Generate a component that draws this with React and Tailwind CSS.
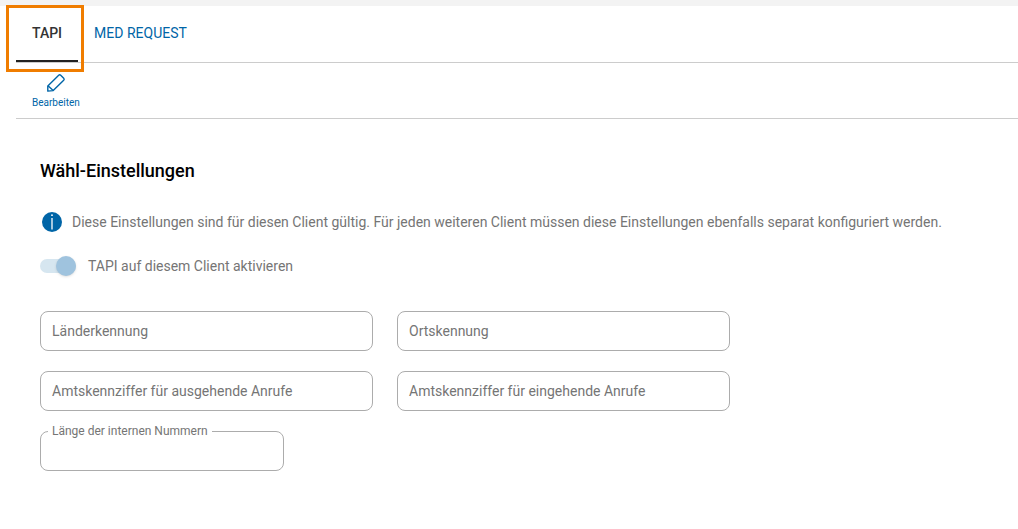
import React, { useState } from 'react';

const FIELDS = [
    { name: 'country_code', label: 'Länderkennung' },
    { name: 'area_code', label: 'Ortskennung' },
    { name: 'prefix_outgoing', label: 'Amtskennziffer für ausgehende Anrufe' },
    { name: 'prefix_incoming', label: 'Amtskennziffer für eingehende Anrufe' }
];

const PencilIcon = () => (
    <svg width="20" height="20" viewBox="0 0 20 20" fill="none" stroke="currentColor" strokeWidth="1.4" strokeLinejoin="round" aria-hidden="true">
        <path d="M12.7 2.2Q13.7 1.2 14.7 2.2L17.7 5.2Q18.7 6.2 17.7 7.2L7.2 17.6L1.8 18.1V12.9Z" />
        <path d="M2 12.7L7.2 17.6" />
    </svg>
);

const InfoIcon = () => (
    <svg width="20" height="20" viewBox="0 0 20 20" className="shrink-0" aria-hidden="true">
        <circle cx="10" cy="10" r="10" fill="#0065a7" />
        <path d="M10 6V17.5" stroke="#ffffff" strokeWidth="1.3" />
        <circle cx="10" cy="3.2" r="0.9" fill="#ffffff" />
    </svg>
);

const TextField = ({ name, label, value, onChange, readOnly }) => (
    <div className="relative">
        <input
            type="text"
            id={name}
            name={name}
            value={value}
            onChange={onChange}
            readOnly={readOnly}
            placeholder=" "
            className="peer block w-full h-10 rounded-lg border border-[#acacac] px-3 text-sm text-[#222222] outline-none"
        />
        <label
            htmlFor={name}
            className="absolute left-2 -top-2 px-1 bg-white text-xs text-[#757575] pointer-events-none peer-placeholder-shown:top-[10px] peer-placeholder-shown:text-sm"
        >
            {label}
        </label>
    </div>
);

const App = () => {
    const [tab, setTab] = useState('TAPI');
    const [editing, setEditing] = useState(false);
    const [enabled, setEnabled] = useState(true);
    const [formData, setFormData] = useState({
        country_code: '',
        area_code: '',
        prefix_outgoing: '',
        prefix_incoming: '',
        number_length: ''
    });

    const handleInputChange = (e) => {
        const { name, value } = e.target;
        setFormData(prev => ({ ...prev, [name]: value }));
    };

    return (
        <div className="min-h-screen bg-white border-t-6 border-[#f3f3f3] pl-4 font-[Roboto,sans-serif]">
            <nav className="flex border-b border-[#cccccc] text-sm">
                {['TAPI', 'MED REQUEST'].map(t => (
                    <div key={t} className="relative">
                        <button
                            type="button"
                            onClick={() => setTab(t)}
                            className={`h-14 px-4 border-b-2 ${tab === t ? 'border-[#222222] font-medium text-[#333333]' : 'border-transparent text-[#0065a7]'}`}
                        >
                            {t}
                        </button>
                        {/* highlight frame around the TAPI tab */}
                        {t === 'TAPI' && (
                            <div className="absolute -left-[10px] -right-[6px] -top-px -bottom-[10px] border-3 border-[#f07d00] pointer-events-none" />
                        )}
                    </div>
                ))}
            </nav>

            <div className="flex border-b border-[#cccccc] px-4 pt-[10px] pb-[9px]">
                <button
                    type="button"
                    onClick={() => setEditing(!editing)}
                    className="flex flex-col items-center gap-1 text-[10px] leading-3 text-[#0065a7]"
                >
                    <PencilIcon />
                    Bearbeiten
                </button>
            </div>

            <main className="px-6 pt-10 pb-12 text-sm text-[#757575]">
                <h1 className="text-lg leading-6 font-medium text-black">Wähl-Einstellungen</h1>

                <div className="mt-[29px] flex items-center gap-[10px] pl-[2px]">
                    <InfoIcon />
                    <p>Diese Einstellungen sind für diesen Client gültig. Für jeden weiteren Client müssen diese Einstellungen ebenfalls separat konfiguriert werden.</p>
                </div>

                <label htmlFor="tapi_enabled" className="mt-6 flex items-center gap-3 w-fit">
                    <span className="relative flex items-center w-9 h-5">
                        <input
                            type="checkbox"
                            role="switch"
                            id="tapi_enabled"
                            checked={enabled}
                            onChange={(e) => editing && setEnabled(e.target.checked)}
                            className="peer appearance-none w-full h-[14px] rounded-full bg-gray-200 checked:bg-[#d6e6f0]"
                        />
                        <span className="absolute left-0 top-0 size-5 rounded-full bg-gray-300 shadow pointer-events-none peer-checked:left-4 peer-checked:bg-[#9fc3de]" />
                    </span>
                    TAPI auf diesem Client aktivieren
                </label>

                <div className="mt-[35px] grid grid-cols-2 gap-x-6 gap-y-5 max-w-[690px]">
                    {FIELDS.map(f => (
                        <TextField
                            key={f.name}
                            name={f.name}
                            label={f.label}
                            value={formData[f.name]}
                            onChange={handleInputChange}
                            readOnly={!editing}
                        />
                    ))}
                </div>

                <div className="relative mt-5 max-w-[244px]">
                    <input
                        type="text"
                        id="number_length"
                        name="number_length"
                        value={formData.number_length}
                        onChange={handleInputChange}
                        readOnly={!editing}
                        className="block w-full h-10 rounded-lg border border-[#acacac] px-3 text-[#222222] outline-none"
                    />
                    <label htmlFor="number_length" className="absolute left-2 -top-2 px-1 bg-white text-xs">
                        Länge der internen Nummern
                    </label>
                </div>
            </main>
        </div>
    );
};

export default App;
